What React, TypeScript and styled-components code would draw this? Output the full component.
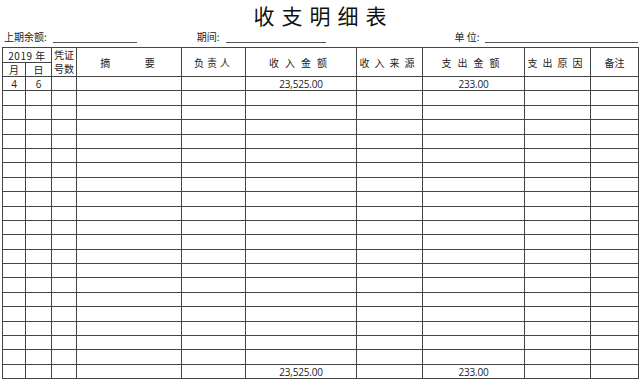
import * as React from 'react';
import styled, { createGlobalStyle } from 'styled-components';

// =========================
// Data
// =========================

const COLUMNS = [23, 26, 25, 105, 64, 111, 66, 102, 66, 48];
const EMPTY_ROWS = 19;

// =========================
// Styles
// =========================

const GlobalStyle = createGlobalStyle`
  html, body {
    margin: 0;
    padding: 0;
    background: #ffffff;
  }
  body {
    font-family: "Noto Sans CJK SC", "Noto Sans", sans-serif;
    color: #222;
  }
`;

const Page = styled.div`
  width: 640px;
  height: 379px;
  overflow: hidden;
  padding: 0 2px 0 2px;
  box-sizing: border-box;
`;

const Title = styled.h1`
  margin: 0;
  height: 30px;
  padding-left: 7px;
  font-size: 21px;
  font-weight: 400;
  line-height: 30px;
  letter-spacing: 7px;
  text-align: center;
  color: #111;
`;

const MetaRow = styled.div`
  display: flex;
  align-items: flex-end;
  height: 13px;
  margin-bottom: 4px;
  font-size: 10px;
  line-height: 12px;
  color: #222;
`;

const MetaLabel = styled.span<{ $left: number }>`
  margin-left: ${({ $left }) => $left}px;
  white-space: nowrap;
`;

const MetaLine = styled.span<{ $width: number; $gap: number }>`
  display: inline-block;
  width: ${({ $width }) => $width}px;
  margin-left: ${({ $gap }) => $gap}px;
  border-bottom: 1px solid #555;
  height: 0;
`;

const Sheet = styled.table`
  width: 636px;
  border-collapse: collapse;
  table-layout: fixed;
  border: 1px solid #333;
`;

const HeadCell = styled.th<{ $spacing?: number }>`
  border: 1px solid #444;
  padding: 0;
  font-size: 10px;
  font-weight: 400;
  line-height: 13px;
  text-align: center;
  vertical-align: middle;
  letter-spacing: ${({ $spacing }) => $spacing ?? 0}px;
  color: #222;
  white-space: nowrap;
`;

const StackLine = styled.span`
  display: block;
  height: 14px;
  line-height: 14px;
`;

const HeadRow = styled.tr<{ $h: number }>`
  height: ${({ $h }) => $h}px;
`;

const BodyRow = styled.tr`
  height: 14.4px;
`;

const Cell = styled.td`
  border: 1px solid #444;
  padding: 0;
  font-family: "Open Sans", "Noto Sans CJK SC", sans-serif;
  font-size: 10px;
  line-height: 12px;
  text-align: center;
  vertical-align: middle;
  color: #222;
  letter-spacing: -0.2px;
`;

// =========================
// Component
// =========================

const Row = ({ values }: { values: Record<number, string> }) => (
    <BodyRow>
        {COLUMNS.map((_, i) => (
            <Cell key={i}>{values[i] ?? ''}</Cell>
        ))}
    </BodyRow>
);

export default function App() {
    return (
        <Page>
            <GlobalStyle />
            <Title>收支明细表</Title>
            <MetaRow>
                <MetaLabel $left={2}>上期余额:</MetaLabel>
                <MetaLine $width={84} $gap={6} />
                <MetaLabel $left={60}>期间:</MetaLabel>
                <MetaLine $width={100} $gap={6} />
                <MetaLabel $left={129}>单 位:</MetaLabel>
                <MetaLine $width={153} $gap={5} />
            </MetaRow>
            <Sheet>
                <colgroup>
                    {COLUMNS.map((w, i) => (
                        <col key={i} style={{ width: w }} />
                    ))}
                </colgroup>
                <thead>
                    <HeadRow $h={15}>
                        <HeadCell colSpan={2} $spacing={0.5}>2019 年</HeadCell>
                        <HeadCell rowSpan={2}>
                            <StackLine>凭证</StackLine>
                            <StackLine>号数</StackLine>
                        </HeadCell>
                        <HeadCell rowSpan={2} $spacing={3}>摘&nbsp;&nbsp;&nbsp;&nbsp;&nbsp;&nbsp;要</HeadCell>
                        <HeadCell rowSpan={2} $spacing={3}>负责人</HeadCell>
                        <HeadCell rowSpan={2} $spacing={6}>收入金额</HeadCell>
                        <HeadCell rowSpan={2} $spacing={5}>收入来源</HeadCell>
                        <HeadCell rowSpan={2} $spacing={6}>支出金额</HeadCell>
                        <HeadCell rowSpan={2} $spacing={5}>支出原因</HeadCell>
                        <HeadCell rowSpan={2}>备注</HeadCell>
                    </HeadRow>
                    <HeadRow $h={14}>
                        <HeadCell>月</HeadCell>
                        <HeadCell>日</HeadCell>
                    </HeadRow>
                </thead>
                <tbody>
                    <Row values={{ 0: '4', 1: '6', 5: '23,525.00', 7: '233.00' }} />
                    {Array.from({ length: EMPTY_ROWS }).map((_, i) => (
                        <Row key={i} values={{}} />
                    ))}
                    <Row values={{ 5: '23,525.00', 7: '233.00' }} />
                </tbody>
            </Sheet>
        </Page>
    );
}
